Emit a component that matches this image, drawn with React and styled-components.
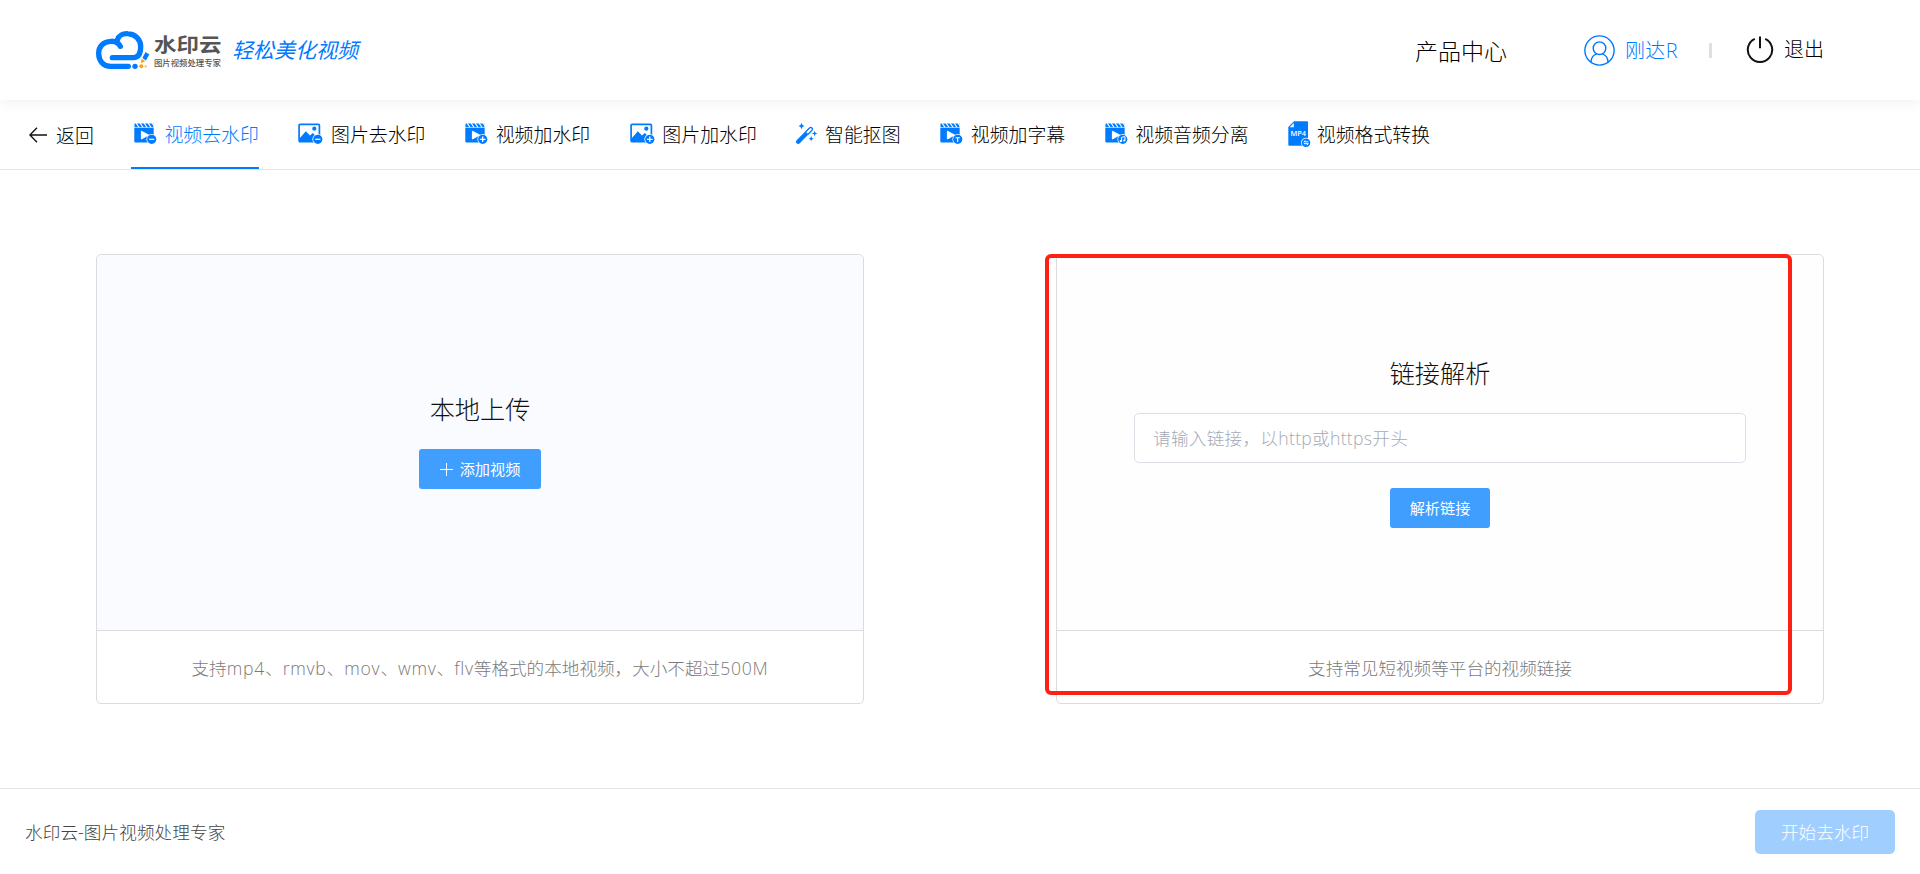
import React from 'react'
import styled, { createGlobalStyle } from 'styled-components'

const GlobalStyle = createGlobalStyle`
  * {
    box-sizing: border-box;
  }
  body {
    margin: 0;
    background: #ffffff;
    color: #000000;
    font-family: "Open Sans", "Noto Sans CJK SC", sans-serif;
    font-weight: 300;
    overflow: hidden;
  }
`

const BLUE = '#007bff'

const CloudLogo = () => (
  <svg width="55" height="40" viewBox="45 45 165 120" fill="none">
    <g stroke={BLUE} strokeWidth="16" strokeLinecap="round" strokeLinejoin="round">
      <path d="M121 94 C114 80 103 78 92 79 C70 80 56 95 56 115 C56 138 70 154 92 154 L145 154" />
      <path d="M112 75 C116 61 129 55 143 56 C166 57 182 73 182 95 C182 114 176 127 160 128 L97 128" />
    </g>
    <path d="M196 110 L209 118 L198 138 L186 129 Z" fill={BLUE} stroke="#ffffff" strokeWidth="2" />
    <path d="M185 131 L196 139 L182 145 Z" fill="#f9a11b" />
    <circle cx="165" cy="154" r="8" fill={BLUE} />
    <circle cx="184" cy="154" r="6" fill="#f9a11b" />
    <circle cx="197" cy="154" r="3.5" fill="#fbc069" />
  </svg>
)

const VideoIcon = ({ children }) => (
  <svg width="23" height="22" viewBox="0 0 23 22" fill="none">
    <path d="M0.5 0.5 H19.5 V4.2 H0.5 Z" fill={BLUE} />
    <path d="M2 0 L5.2 4.6 M6 0 L9.2 4.6 M10 0 L13.2 4.6 M14 0 L17.2 4.6 M18 0 L21.2 4.6" stroke="#ffffff" strokeWidth="1.1" />
    <path d="M0.3 4.8 H19.7 V19.5 H1.3 Q0.3 19.5 0.3 18.5 Z" fill={BLUE} />
    <path d="M7.4 8.2 L14.6 12 L7.4 16 Z" fill="#ffffff" stroke="#ffffff" strokeLinejoin="round" />
    <circle cx="17.7" cy="16.3" r="5.3" fill="#ffffff" />
    <circle cx="17.7" cy="16.3" r="4.6" fill={BLUE} />
    {children}
  </svg>
)

const ImageIcon = ({ children }) => (
  <svg width="25" height="22" viewBox="0 0 25 22" fill="none">
    <rect x="1.1" y="1.3" width="20.3" height="17.3" rx="1" stroke={BLUE} strokeWidth="1.7" />
    <path d="M1.5 15.5 L7.8 8.2 L12 12.5 L14.8 10 L20.5 15.5 V18.5 H1.5 Z" fill={BLUE} />
    <circle cx="16.3" cy="5.7" r="2.1" fill={BLUE} />
    <circle cx="19.8" cy="16.3" r="5.4" fill="#ffffff" />
    <circle cx="19.8" cy="16.3" r="4.6" fill={BLUE} />
    {children}
  </svg>
)

const Minus = ({ cx }) => <path d={`M${cx - 2.6} 16.3 h5.2`} stroke="#ffffff" strokeWidth="1.2" />
const Plus = ({ cx }) => <path d={`M${cx - 2.8} 16.3 h5.6 M${cx} 13.5 v5.6`} stroke="#ffffff" strokeWidth="1.3" />

const WandIcon = () => (
  <svg width="22" height="22" viewBox="0 0 22 22" fill="none">
    <path d="M2.2 18.8 L14 6.8" stroke={BLUE} strokeWidth="4.4" strokeLinecap="round" />
    <path d="M11.3 9.6 L14.8 6.1" stroke={BLUE} strokeWidth="4.6" strokeLinecap="round" />
    <path d="M11.6 9.3 L14.7 6.2" stroke="#ffffff" strokeWidth="2.1" strokeLinecap="round" />
    <path d="M5.5 0 Q6 2.5 8.5 3 Q6 3.5 5.5 6.2 Q5 3.5 2.5 3 Q5 2.5 5.5 0 Z" fill={BLUE} />
    <path d="M18.6 7.8 L19.4 9.7 L21.4 10.4 L19.4 11.2 L18.6 13.2 L17.8 11.2 L15.8 10.4 L17.8 9.7 Z" fill={BLUE} />
    <path d="M15.2 13.1 L16 15.1 L17.8 15.7 L16 16.4 L15.2 18.3 L14.4 16.4 L12.6 15.7 L14.4 15.1 Z" fill={BLUE} />
  </svg>
)

const Mp4Icon = () => (
  <svg width="23" height="26" viewBox="0 0 23 26" fill="none">
    <path d="M6 0.3 H19 Q20 0.3 20 1.3 V24.8 H1.3 Q0.3 24.8 0.3 23.8 V6 Z" fill={BLUE} />
    <path d="M1.7 6.2 H5.8 V1.9 Z" fill="#ffffff" />
    <text x="10.2" y="15.4" fill="#ffffff" fontSize="7.4" fontWeight="600" fontFamily="Open Sans" textAnchor="middle">MP4</text>
    <circle cx="18" cy="21.7" r="5" fill="#ffffff" />
    <circle cx="18" cy="21.7" r="4.3" fill={BLUE} />
    <path d="M20.4 20.8 H15.8 L17.4 19.5 M15.8 22.7 H20.4 L18.8 24" stroke="#ffffff" strokeWidth="1" />
  </svg>
)

const UserIcon = () => (
  <svg width="31" height="31" viewBox="0 0 31 31" fill="none" stroke={BLUE} strokeWidth="1.4">
    <circle cx="15.5" cy="15.5" r="14.6" />
    <circle cx="15.5" cy="13.2" r="6.3" />
    <path d="M6.9 27.1 C7.3 22 10 19.6 12.8 18.8 M24.1 27.1 C23.7 22 21 19.6 18.2 18.8" />
  </svg>
)

const PowerIcon = () => (
  <svg width="28" height="28" viewBox="0 0 28 28" fill="none" stroke="#111111" strokeWidth="2">
    <path d="M8.8 2.8 A12.2 12.2 0 1 0 19.2 2.8" />
    <path d="M14 0.5 V12.2" />
  </svg>
)

const BackArrow = () => (
  <svg width="18" height="16" viewBox="0 0 18 16" fill="none" stroke="#111111" strokeWidth="1.4">
    <path d="M18 8 H1 M8 0.7 L0.9 8 L8 15.3" />
  </svg>
)

const navItems = [
  { label: '视频去水印', width: 30.4, icon: <VideoIcon><Minus cx={17.7} /></VideoIcon>, active: true },
  { label: '图片去水印', width: 32.6, icon: <ImageIcon><Minus cx={19.8} /></ImageIcon> },
  { label: '视频加水印', width: 30.6, icon: <VideoIcon><Plus cx={17.7} /></VideoIcon> },
  { label: '图片加水印', width: 32.6, icon: <ImageIcon><Plus cx={19.8} /></ImageIcon> },
  { label: '智能抠图', width: 28.6, icon: <WandIcon /> },
  {
    label: '视频加字幕',
    width: 30.6,
    icon: <VideoIcon><path d="M15.5 14.7 h4.4 M17.7 14.7 v4.3" stroke="#ffffff" strokeWidth="1.1" /></VideoIcon>,
  },
  {
    label: '视频音频分离',
    width: 30.4,
    icon: (
      <VideoIcon>
        <path d="M16.6 18.2 V14.4 L20 13.6 V17.5" stroke="#ffffff" />
        <circle cx="15.8" cy="18.2" r="1.1" fill="#ffffff" />
        <circle cx="19.2" cy="17.5" r="1.1" fill="#ffffff" />
      </VideoIcon>
    ),
  },
  { label: '视频格式转换', width: 28.6, icon: <Mp4Icon /> },
]

const App = () => (
  <Page>
    <GlobalStyle />
    <Header>
      <Brand>
        <CloudLogo />
        <BrandName>
          <strong>水印云</strong>
          <small>图片视频处理专家</small>
        </BrandName>
        <Slogan>轻松美化视频</Slogan>
      </Brand>
      <Account>
        <Products>产品中心</Products>
        <UserLink>
          <UserIcon />
          <span>刚达R</span>
        </UserLink>
        <Separator />
        <Logout>
          <PowerIcon />
          退出
        </Logout>
      </Account>
    </Header>
    <Nav>
      <Back>
        <BackArrow />
        返回
      </Back>
      {navItems.map(item => (
        <NavItem key={item.label} $active={item.active}>
          <NavIcon $width={item.width}>{item.icon}</NavIcon>
          {item.label}
        </NavItem>
      ))}
    </Nav>
    <Main>
      <Card>
        <CardBody $tinted>
          <CardTitle $gap={5}>本地上传</CardTitle>
          <Button $width={122}>
            <svg width="13" height="13" viewBox="0 0 13 13" stroke="#ffffff" fill="none">
              <path d="M0 6.5 H13 M6.5 0 V13" />
            </svg>
            添加视频
          </Button>
        </CardBody>
        <CardHint>
          <span>
            支持<Latin>mp4</Latin>、<Latin>rmvb</Latin>、<Latin>mov</Latin>、<Latin>wmv</Latin>、<Latin>flv</Latin>等格式的本地视频，大小不超过<Latin>500M</Latin>
          </span>
        </CardHint>
      </Card>
      <Card>
        <CardBody>
          <CardTitle $gap={3}>链接解析</CardTitle>
          <LinkInput placeholder="请输入链接，以http或https开头" />
          <Button $width={100}>解析链接</Button>
        </CardBody>
        <CardHint>支持常见短视频等平台的视频链接</CardHint>
        <Highlight />
      </Card>
    </Main>
    <Footer>
      <span>水印云-图片视频处理专家</span>
      <StartButton disabled>开始去水印</StartButton>
    </Footer>
  </Page>
)

const Page = styled.div`
  display: flex;
  flex-direction: column;
  height: 874px;
`

const Latin = styled.span`
  letter-spacing: 0.75px;
`

const Header = styled.header`
  display: flex;
  justify-content: space-between;
  align-items: center;
  height: 100px;
  padding: 0 96px 0 95px;
  background: #ffffff;
  box-shadow: 0 0 16px rgba(0, 0, 0, 0.08);
`

const Brand = styled.div`
  display: flex;
  align-items: center;
`

const BrandName = styled.div`
  display: flex;
  flex-direction: column;
  width: 68px;
  margin: 2px 0 0 4px;
  color: #555555;
  white-space: nowrap;
  strong {
    font-size: 19.4px;
    font-weight: 700;
    line-height: 22px;
    transform: scaleX(1.16);
    transform-origin: left;
  }
  small {
    margin-top: 1px;
    font-size: 8.4px;
    font-weight: 500;
    line-height: 12px;
  }
`

const Slogan = styled.span`
  margin-left: 10px;
  color: ${BLUE};
  font-size: 21px;
  font-style: italic;
  font-weight: 400;
  line-height: 28px;
`

const Account = styled.div`
  display: flex;
  align-items: center;
  font-size: 20px;
  line-height: 28px;
`

const Products = styled.span`
  margin: 1px 77px 0 0;
  font-size: 23px;
`

const UserLink = styled.a`
  display: flex;
  align-items: center;
  gap: 10px;
  color: ${BLUE};
  span {
    margin-top: 1px;
    letter-spacing: 0.4px;
  }
`

const Separator = styled.i`
  width: 3px;
  height: 15px;
  margin: 0 34px 0 31px;
  background: #dcdfe6;
`

const Logout = styled.a`
  display: flex;
  align-items: center;
  gap: 10px;
`

const Nav = styled.nav`
  display: flex;
  gap: 37px;
  height: 70px;
  padding-left: 29px;
  border-bottom: 1px solid #e4e4e4;
  font-size: 18.9px;
`

const Back = styled.a`
  display: flex;
  align-items: center;
  gap: 9px;
  width: 65px;
  height: 69px;
  white-space: nowrap;
`

const NavItem = styled.a`
  display: flex;
  align-items: center;
  height: 69px;
  margin-right: -0.4px;
  padding-left: 3px;
  white-space: nowrap;
  border-bottom: 2px solid ${({ $active }) => ($active ? BLUE : 'transparent')};
  color: ${({ $active }) => ($active ? BLUE : '#000000')};
`

const NavIcon = styled.span`
  display: flex;
  flex: none;
  width: ${({ $width }) => $width}px;
`

const Main = styled.main`
  display: flex;
  justify-content: space-between;
  flex: 1;
  padding: 84px 96px 0;
`

const Card = styled.section`
  position: relative;
  display: flex;
  flex-direction: column;
  width: 768px;
  height: 450px;
  border: 1px solid #dcdcdc;
  border-radius: 5px;
`

const CardBody = styled.div`
  display: flex;
  flex-direction: column;
  align-items: center;
  justify-content: center;
  gap: 20px;
  height: 376px;
  padding-top: 1px;
  border-bottom: 1px solid #dcdcdc;
  border-radius: 5px 5px 0 0;
  background: ${({ $tinted }) => ($tinted ? '#fafbff' : '#fefefe')};
`

const CardTitle = styled.h2`
  margin: ${({ $gap }) => `-${$gap}px 0 ${$gap}px`};
  color: #111111;
  font-size: 25.2px;
  font-weight: 300;
  line-height: 34px;
`

const Button = styled.button`
  display: flex;
  align-items: center;
  justify-content: center;
  gap: 7px;
  width: ${({ $width }) => $width}px;
  height: 40px;
  margin-top: -2px;
  padding: 0 0 2px;
  border: none;
  border-radius: 3px;
  background: #409eff;
  color: #ffffff;
  font-family: inherit;
  font-size: 15.2px;
  font-weight: 400;
  svg {
    margin-top: 2px;
  }
`

const LinkInput = styled.input`
  width: 612px;
  height: 50px;
  margin-bottom: 7px;
  padding: 0 18px;
  border: 1px solid #dcdfe6;
  border-radius: 5px;
  background: #ffffff;
  font-family: inherit;
  font-size: 17.6px;
  font-weight: 300;
  letter-spacing: 0.3px;
  &::placeholder {
    color: #a4aab5;
  }
`

const CardHint = styled.p`
  display: flex;
  flex: 1;
  align-items: center;
  justify-content: center;
  margin: 0;
  color: #7a7a7a;
  font-size: 17.6px;
`

const Highlight = styled.div`
  position: absolute;
  top: -1px;
  left: -12px;
  width: 747px;
  height: 441px;
  border: 4px solid #ff2015;
  border-radius: 6px;
  pointer-events: none;
`

const Footer = styled.footer`
  display: flex;
  align-items: center;
  justify-content: space-between;
  height: 86px;
  padding: 0 25px;
  border-top: 1px solid #e4e4e4;
  color: #444444;
  font-size: 17.6px;
  span {
    letter-spacing: 0.1px;
  }
`

const StartButton = styled.button`
  width: 140px;
  height: 44px;
  padding: 0;
  border: none;
  border-radius: 5px;
  background: #a0cfff;
  color: #ffffff;
  font-family: inherit;
  font-size: 17.6px;
  font-weight: 300;
`

export default App
